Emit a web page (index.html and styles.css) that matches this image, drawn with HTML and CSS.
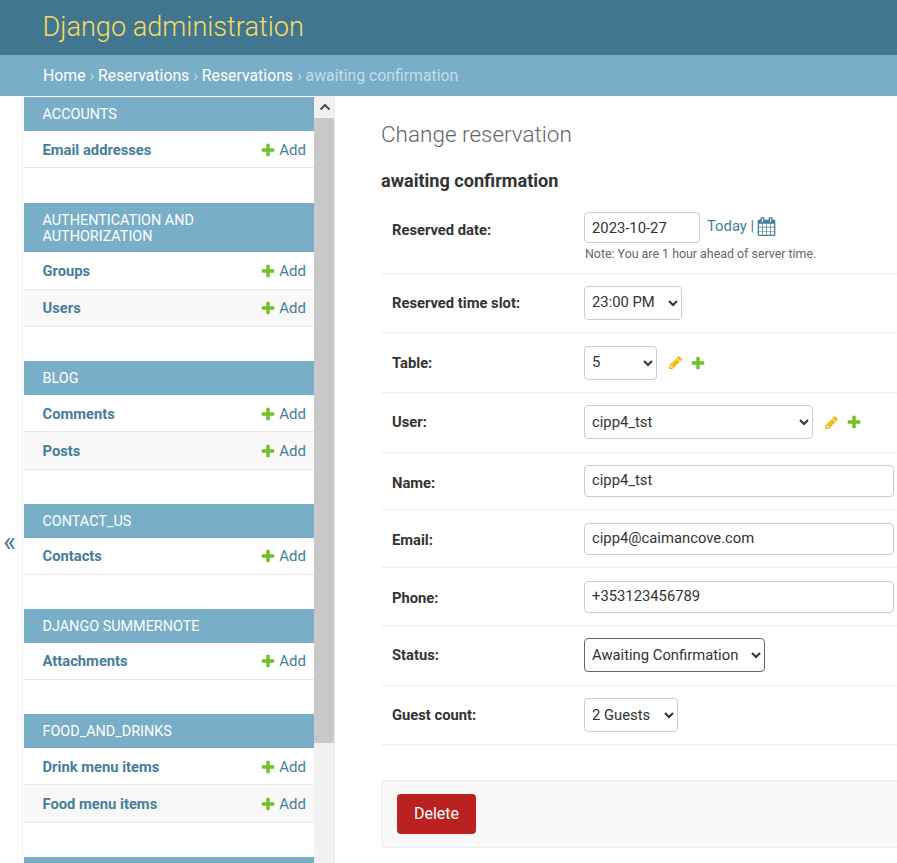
FILE: index.html
```html
<!DOCTYPE html>
<html lang="en">
<head>
<meta charset="utf-8">
<title>Change reservation</title>
<link rel="stylesheet" href="styles.css">
</head>
<body>
<svg class="defs" width="0" height="0" aria-hidden="true">
  <symbol id="plus" viewBox="0 0 1792 1792"><path fill="#70bf2b" d="M1600 796v192q0 40-28 68t-68 28h-416v416q0 40-28 68t-68 28h-192q-40 0-68-28t-28-68v-416h-416q-40 0-68-28t-28-68v-192q0-40 28-68t68-28h416v-416q0-40 28-68t68-28h192q40 0 68 28t28 68v416h416q40 0 68 28t28 68z"/></symbol>
  <symbol id="pencil" viewBox="0 0 1792 1792"><path fill="#efb80b" d="M491 1536l91-91-235-235-91 91v107h128v128h107zm523-928q0-22-22-22-10 0-17 7l-542 542q-7 7-7 17 0 22 22 22 10 0 17-7l542-542q7-7 7-17zm-54-192l416 416-832 832h-416v-416zm683 96q0 53-37 90l-166 166-416-416 166-165q36-38 90-38 53 0 91 38l235 234q37 39 37 91z"/></symbol>
</svg>
<header class="site-header"><div class="branding">Django administration</div></header>
<nav class="breadcrumbs"><a href="#">Home</a> › <a href="#">Reservations</a> › <a href="#">Reservations</a> › awaiting confirmation</nav>
<div class="layout">
  <button class="toggle" type="button">«</button>
  <aside class="sidebar">
    <div class="modules">
      <section class="module"><h2 class="caption">ACCOUNTS</h2>
        <div class="model"><a class="model-name" href="#">Email addresses</a><a class="add" href="#"><svg class="plus-icon"><use href="#plus"/></svg>Add</a></div>
      </section>
      <section class="module"><h2 class="caption">AUTHENTICATION AND AUTHORIZATION</h2>
        <div class="model"><a class="model-name" href="#">Groups</a><a class="add" href="#"><svg class="plus-icon"><use href="#plus"/></svg>Add</a></div>
        <div class="model alt"><a class="model-name" href="#">Users</a><a class="add" href="#"><svg class="plus-icon"><use href="#plus"/></svg>Add</a></div>
      </section>
      <section class="module"><h2 class="caption">BLOG</h2>
        <div class="model"><a class="model-name" href="#">Comments</a><a class="add" href="#"><svg class="plus-icon"><use href="#plus"/></svg>Add</a></div>
        <div class="model alt"><a class="model-name" href="#">Posts</a><a class="add" href="#"><svg class="plus-icon"><use href="#plus"/></svg>Add</a></div>
      </section>
      <section class="module"><h2 class="caption">CONTACT_US</h2>
        <div class="model"><a class="model-name" href="#">Contacts</a><a class="add" href="#"><svg class="plus-icon"><use href="#plus"/></svg>Add</a></div>
      </section>
      <section class="module"><h2 class="caption">DJANGO SUMMERNOTE</h2>
        <div class="model"><a class="model-name" href="#">Attachments</a><a class="add" href="#"><svg class="plus-icon"><use href="#plus"/></svg>Add</a></div>
      </section>
      <section class="module"><h2 class="caption">FOOD_AND_DRINKS</h2>
        <div class="model"><a class="model-name" href="#">Drink menu items</a><a class="add" href="#"><svg class="plus-icon"><use href="#plus"/></svg>Add</a></div>
        <div class="model alt"><a class="model-name" href="#">Food menu items</a><a class="add" href="#"><svg class="plus-icon"><use href="#plus"/></svg>Add</a></div>
      </section>
      <section class="module module-cut"></section>
    </div>
    <div class="scrollbar">
      <div class="scroll-up"><svg width="12" height="8" viewBox="0 0 12 8"><path d="M1.5 6.5 6 2l4.500 4.500" fill="none" stroke="#505050" stroke-width="2.200"/></svg></div>
      <div class="scroll-thumb"></div>
    </div>
  </aside>
  <main class="content">
    <h1 class="page-title">Change reservation</h1>
    <h2 class="object-title">awaiting confirmation</h2>
    <form class="change-form">
      <div class="row row-date">
        <label class="label">Reserved date:</label>
        <div class="field">
          <div class="inline"><input class="input input-date" type="text" value="2023-10-27"><span class="shortcuts"><span class="today-wrap"><a href="#">Today</a> | </span><a class="cal" href="#"><svg width="19" height="19" viewBox="0 0 1792 1792"><path fill="#447e9b" d="M192 1664h288v-288h-288v288zm352 0h320v-288h-320v288zm-352-352h288v-320h-288v320zm352 0h320v-320h-320v320zm-352-384h288v-288h-288v288zm736 736h320v-288h-320v288zm-384-736h320v-288h-320v288zm768 736h288v-288h-288v288zm-384-352h320v-320h-320v320zm-352-864v-288q0-13-9.500-22.500t-22.500-9.500h-64q-13 0-22.500 9.500t-9.500 22.500v288q0 13 9.500 22.500t22.500 9.500h64q13 0 22.500-9.500t9.500-22.500zm736 864h288v-320h-288v320zm-384-384h320v-288h-320v288zm384 0h288v-288h-288v288zm32-480v-288q0-13-9.500-22.500t-22.500-9.500h-64q-13 0-22.500 9.500t-9.500 22.500v288q0 13 9.500 22.500t22.500 9.500h64q13 0 22.500-9.500t9.500-22.500zm384-64v1280q0 52-38 90t-90 38h-1408q-52 0-90-38t-38-90v-1280q0-52 38-90t90-38h128v-96q0-66 47-113t113-47h64q66 0 113 47t47 113v96h384v-96q0-66 47-113t113-47h64q66 0 113 47t47 113v96h128q52 0 90 38t38 90z"/></svg></a></span></div>
          <p class="note">Note: You are 1 hour ahead of server time.</p>
        </div>
      </div>
      <div class="row">
        <label class="label">Reserved time slot:</label>
        <div class="field"><select class="select s-time"><option>23:00 PM</option></select></div>
      </div>
      <div class="row">
        <label class="label">Table:</label>
        <div class="field"><select class="select s-table"><option>5</option></select><a class="rel" href="#"><svg class="rel-icon"><use href="#pencil"/></svg></a><a class="rel" href="#"><svg class="rel-plus"><use href="#plus"/></svg></a></div>
      </div>
      <div class="row">
        <label class="label">User:</label>
        <div class="field"><select class="select s-user"><option>cipp4_tst</option></select><a class="rel" href="#"><svg class="rel-icon"><use href="#pencil"/></svg></a><a class="rel" href="#"><svg class="rel-plus"><use href="#plus"/></svg></a></div>
      </div>
      <div class="row row-text">
        <label class="label">Name:</label>
        <div class="field"><input class="input input-wide" type="text" value="cipp4_tst"></div>
      </div>
      <div class="row row-text">
        <label class="label">Email:</label>
        <div class="field"><input class="input input-wide" type="text" value="cipp4@caimancove.com"></div>
      </div>
      <div class="row row-text">
        <label class="label">Phone:</label>
        <div class="field"><input class="input input-wide" type="text" value="+353123456789"></div>
      </div>
      <div class="row">
        <label class="label">Status:</label>
        <div class="field"><select class="select s-status"><option>Awaiting Confirmation</option></select></div>
      </div>
      <div class="row">
        <label class="label">Guest count:</label>
        <div class="field"><select class="select s-guests"><option>2 Guests</option></select></div>
      </div>
      <div class="submit-row"><a class="delete" href="#">Delete</a></div>
    </form>
  </main>
</div>
</body>
</html>
```
FILE: styles.css
```css
* { box-sizing: border-box; }
html, body { margin: 0; height: 100%; overflow: hidden; }
body { font-family: Roboto, "Liberation Sans", sans-serif; font-size: 16px; color: #333; background: #fff; display: flex; flex-direction: column; }
a { text-decoration: none; color: inherit; }
.defs { position: absolute; }

.site-header { height: 55px; flex: none; background: #417690; padding: 0 42.500px; display: flex; align-items: center; }
.branding { font-size: 27.100px; font-weight: 300; color: #f5dd5d; padding-bottom: 1px; }
.breadcrumbs { height: 41px; line-height: 41px; flex: none; background: #79aec8; padding: 0 43px; font-size: 15.800px; color: #c4dce8; white-space: nowrap; }
.breadcrumbs a { color: #fff; }

.layout { flex: 1; min-height: 0; display: flex; }
.toggle { flex: none; width: 23px; border: 0; border-right: 1px solid #eee; background: #fff; color: #447e9b; font: 400 27px Roboto, sans-serif; padding: 125px 3px 0 0; text-align: center; align-self: stretch; line-height: 30px; }
.sidebar { flex: none; width: 312px; display: flex; border-right: 1px solid #eee; overflow: hidden; padding-left: 1px; }
.modules { width: 290px; flex: none; padding-top: 1.400px; }
.module { margin-bottom: 34.100px; }
.module-cut { height: 10px; background: #79aec8; }
.caption { margin: 0; background: #79aec8; color: #fff; font-size: 14.400px; font-weight: 400; line-height: 16px; padding: 10px 18.500px 7.600px; }
.model { height: 37.500px; padding: 1px 8px 0 18.500px; display: flex; align-items: center; justify-content: space-between; border-bottom: 1px solid #e8e8e8; font-size: 14.750px; }
.model.alt { background: #f8f8f8; }
.model-name { font-weight: 700; color: #447e9b; }
.add { color: #447e9b; display: flex; align-items: center; gap: 3px; font-size: 15px; }
.plus-icon { width: 16px; height: 16px; }

.scrollbar { flex: none; width: 21px; background: #f1f1f1; }
.scroll-up { height: 22px; display: flex; align-items: center; justify-content: center; }
.scroll-thumb { height: 625px; background: #c8c8c8; }

.content { flex: none; width: 700px; padding: 24px 0 0 46px; }
.page-title { margin: 0; font-size: 22.500px; font-weight: 300; color: #666; line-height: 28px; }
.object-title { margin: 22px 0 0; font-size: 18.100px; font-weight: 700; color: #333; line-height: 22px; }
.change-form { margin-top: 8px; width: 560px; }
.row { display: flex; align-items: center; padding: 12.350px 11px; border-bottom: 1px solid #eee; }
.row-text { padding: 12.400px 11px; }
.row-date { padding: 12px 11px 11.600px; align-items: flex-start; }
.row-date .label { padding-top: 9px; }
.row-text .label { padding-top: 3px; }
.label { width: 192px; flex: none; font-size: 14.750px; font-weight: 700; color: #333; }
.field { display: flex; align-items: center; flex: 1; }
.row-date .field { display: block; }
.inline { display: flex; align-items: center; }
.input, .select { font-family: Roboto, sans-serif; font-size: 14.800px; color: #333; border: 1px solid #ccc; border-radius: 4px; background: #fff; }
.input { height: 32px; padding: 0 7px 2px; }
.input-date { width: 116px; height: 31px; padding: 0 7px; }
.input-wide { width: 310px; }
.select { height: 34px; padding: 0 3px 1px; }
.s-time { width: 98px; }
.s-table { width: 73px; }
.s-user { width: 229px; }
.s-status { width: 181px; border-color: #666; }
.s-guests { width: 94px; }
.shortcuts { margin-left: 7px; color: #447e9b; display: flex; align-items: center; font-size: 14.800px; white-space: pre; }
.today-wrap { padding-bottom: 3px; }
.cal { display: flex; margin: 0 0 2px -1px; }
.note { margin: 3px 0 0 1px; font-size: 12.400px; color: #666; line-height: 15px; }
.rel { display: flex; margin-left: 7px; }
.rel:first-of-type { margin-left: 11px; }
.rel-icon { width: 15px; height: 15px; }
.rel-plus { width: 16px; height: 16px; }
.submit-row { margin-top: 34.500px; height: 68.500px; background: #f8f8f8; border: 1px solid #eee; border-radius: 4px; padding: 13px 15px; width: 700px; }
.delete { display: flex; align-items: center; justify-content: center; width: 79px; height: 40px; background: #ba2121; color: #fff; border-radius: 4px; font-size: 16px; }
```
